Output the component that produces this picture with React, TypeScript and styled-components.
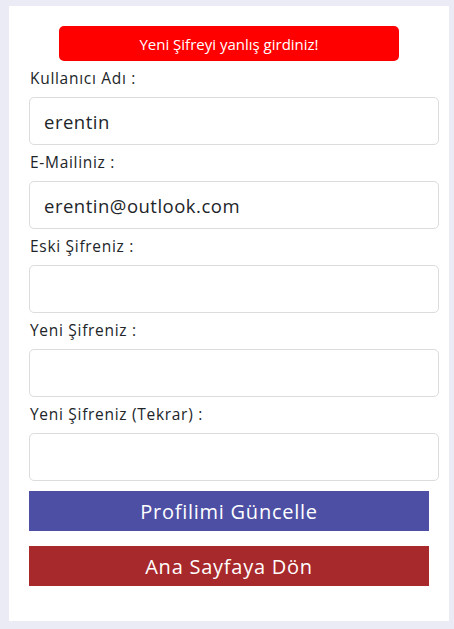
import React from "react";
import styled, { createGlobalStyle } from "styled-components";

const Global = createGlobalStyle`
  html, body { margin: 0; padding: 0; background: #ebebf5; }
  body { font-family: "Open Sans", "Liberation Sans", sans-serif; }
  * { box-sizing: border-box; }
`;

const Page = styled.div`
  padding: 6px 5px 8px 9px;
`;

const Card = styled.div`
  background: #ffffff;
  width: 440px;
  padding: 20px 0 35px 0;
  display: flex;
  flex-direction: column;
`;

const Alert = styled.div`
  align-self: center;
  width: 340px;
  height: 35px;
  background: #ff0000;
  color: #ffffff;
  border-radius: 5px;
  display: flex;
  align-items: center;
  justify-content: center;
  font-size: 15px;
  letter-spacing: 0px;
`;

const Form = styled.div`
  padding: 5px 20px 0 20px;
  display: flex;
  flex-direction: column;
`;

const Field = styled.div`
  display: flex;
  flex-direction: column;
  margin-bottom: 5px;
`;

const Label = styled.label`
  display: block;
  height: 24px;
  line-height: 24px;
  font-size: 15.5px;
  color: #212529;
  padding-left: 1px;
  margin-bottom: 7px;
  letter-spacing: 0.7px;
`;

const Input = styled.input`
  width: 410px;
  height: 48px;
  border: 1px solid #dcdcdc;
  border-radius: 5px;
  padding: 0 14px;
  font-family: "Open Sans", "Liberation Sans", sans-serif;
  font-size: 18.5px;
  color: #212529;
  outline: none;
  background: #ffffff;
  letter-spacing: 0.5px;
`;

const Button = styled.button<{ $bg: string; $mt: number }>`
  width: 400px;
  height: 40px;
  margin-top: ${(p) => p.$mt}px;
  background: ${(p) => p.$bg};
  color: #ffffff;
  border: none;
  font-family: "Open Sans", "Liberation Sans", sans-serif;
  font-size: 20px;
  letter-spacing: 0.75px;
  display: flex;
  align-items: center;
  justify-content: center;
  padding: 0;
  cursor: pointer;
`;

const fields = [
  { label: "Kullanıcı Adı :", value: "erentin", type: "text" },
  { label: "E-Mailiniz :", value: "erentin@outlook.com", type: "text" },
  { label: "Eski Şifreniz :", value: "", type: "password" },
  { label: "Yeni Şifreniz :", value: "", type: "password" },
  { label: "Yeni Şifreniz (Tekrar) :", value: "", type: "password" },
];

export default function App() {
  return (
    <>
      <Global />
      <Page>
        <Card>
          <Alert>Yeni Şifreyi yanlış girdiniz!</Alert>
          <Form>
            {fields.map((f) => (
              <Field key={f.label}>
                <Label>{f.label}</Label>
                <Input type={f.type} defaultValue={f.value} />
              </Field>
            ))}
            <Button $bg="#4c4fa3" $mt={5}>Profilimi Güncelle</Button>
            <Button $bg="#a8292b" $mt={15}>Ana Sayfaya Dön</Button>
          </Form>
        </Card>
      </Page>
    </>
  );
}
